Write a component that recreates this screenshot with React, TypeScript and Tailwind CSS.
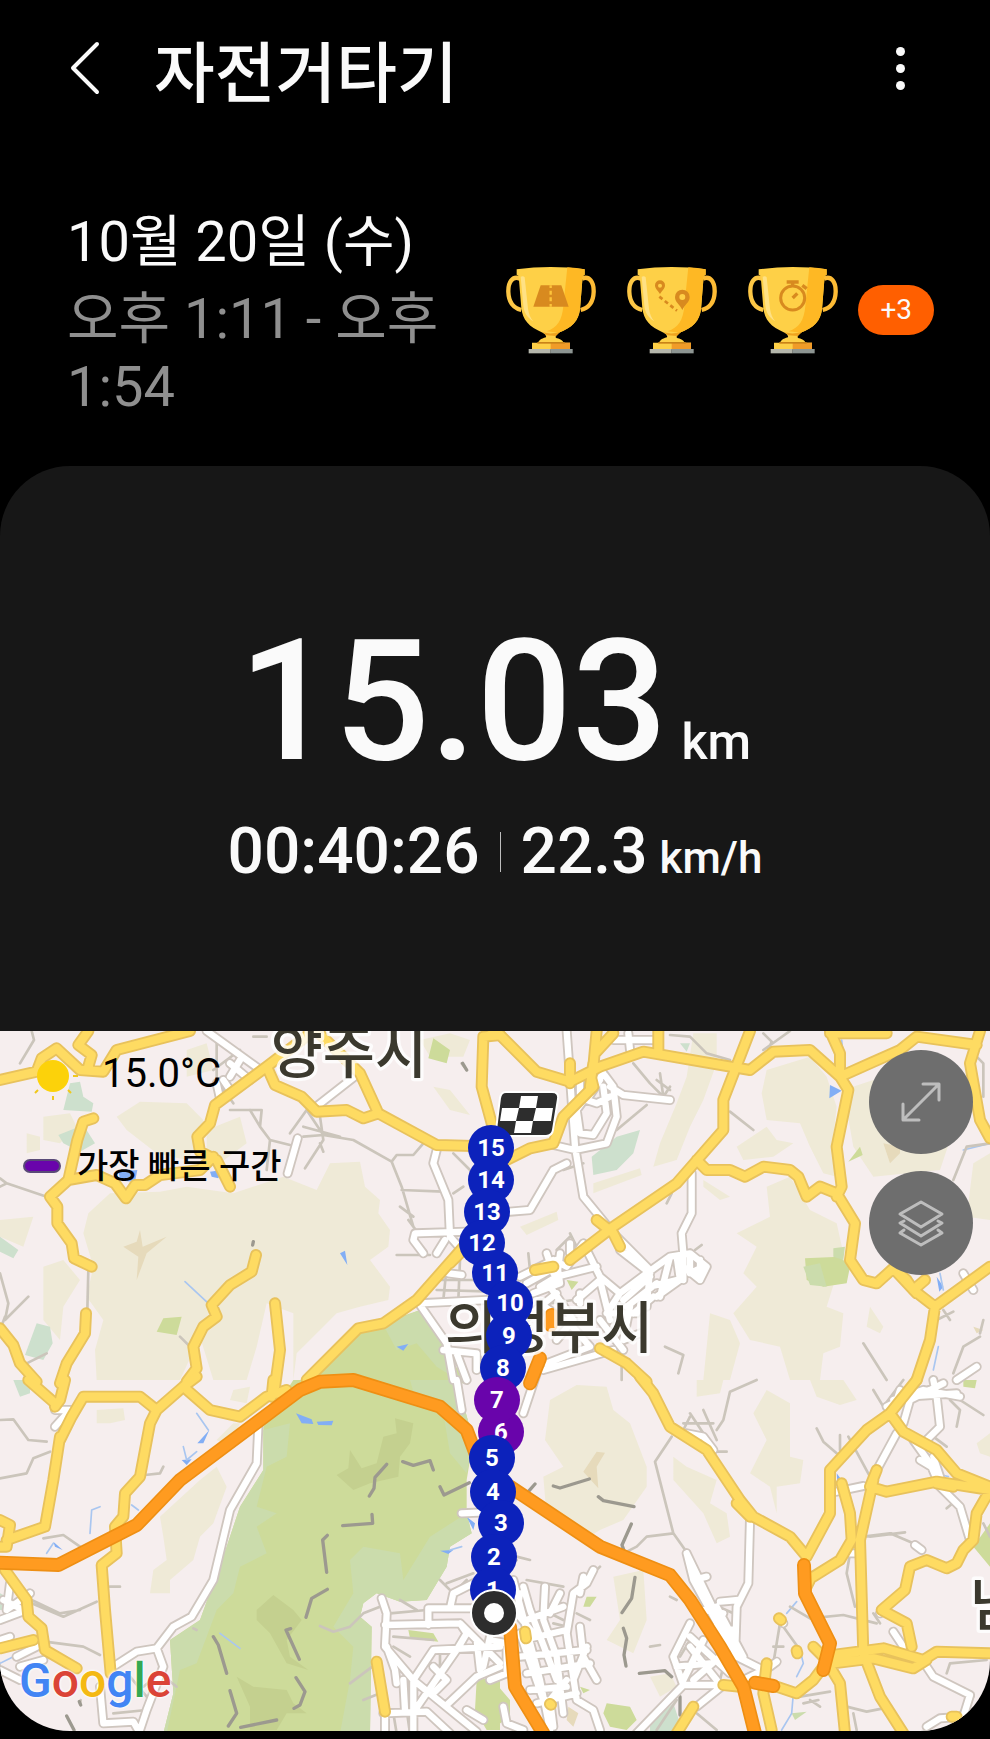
import type { ReactNode } from 'react'

interface MapTile {
  x: number
  y: number
  beige: string
  green: string
  lightGreen: string
  darkGreen: string
  mint: string
  sand: string
  water: string
  stream: string
  minor: string
  ridge: string
  white: string
  yellow: string
  orange: string
}

// Four overlapping tiles on a 2970 x 2100 canvas
const tiles: MapTile[] = [
  {
    x: 0,
    y: -33,
    beige:
      'M265 580L330 520L480 515L560 500L700 520L850 470L950 510L990 430L1080 425L1095 500L1140 540L1135 580L1170 630L1165 680L1110 720L1170 800L1165 840L1080 860L1010 880L960 930L890 1000L880 1080L880 880L800 850L770 980L740 1080L640 1080L600 950L540 1080L290 1080L285 990L310 900L260 830L280 740L250 640ZM350 290L420 245L560 250L610 300L590 380L560 420L470 400L380 330ZM620 330L720 290L740 370L660 430L620 400ZM560 90L620 70L640 150L560 170ZM130 290L210 280L230 320L180 370L130 360ZM80 340L120 350L120 390L80 400ZM1260 60L1350 40L1410 60L1390 110L1290 110ZM1300 200L1350 210L1410 285L1350 270ZM0 600L100 590L70 680L0 650ZM130 740L190 720L240 780L190 860L180 960L130 900Z',
    green: 'M1070 935L1260 870L1400 1090L920 1090ZM490 895L545 890L530 945L470 935ZM1300 55L1350 90L1340 130L1285 115Z',
    lightGreen: 'M1150 915L1260 870L1330 980L1390 1090L1310 1040L1250 970L1190 990Z',
    darkGreen: '',
    mint: 'M210 190L240 185L250 230L280 250L275 275L190 270ZM175 345L250 315L285 370L240 395L190 370ZM110 910L150 920L158 970L130 1020L75 1005ZM0 650L55 690L40 715L0 695Z',
    sand: 'M370 680L410 665L420 630L428 680L500 650L440 700L410 780L415 710Z',
    water: 'M1020 700L1035 692L1042 735ZM355 455L412 450L405 485L362 482ZM630 455L665 450L655 475L635 470ZM1190 980L1225 972L1210 992Z',
    stream: 'M555 785L625 850',
    minor:
      'M95 33L102 60L60 130M0 475L20 490L140 530M0 500L20 490M265 750L262 870M0 760L25 850L15 900L85 830M15 890L0 930M690 270L785 270L780 320L810 360L870 375L810 360L800 450M750 270L780 320M915 445L970 360L960 290M910 350L970 345L1060 360L1175 425L1205 500L1240 620M1175 425L1190 405L1240 405L1270 370M1205 510L1330 515M870 340L920 270L970 345M650 70L650 180L700 250M640 150L720 90M1190 705L1290 705M1360 400L1410 450M1200 560L1240 590M1225 600L1255 640M910 320L1020 350M760 50L800 50M540 950L570 980M1310 780L1500 780M1310 810L1480 815M1340 740L1330 840M1380 720L1375 840M1390 500L1360 520M140 1000L80 1030M960 370L970 395M1385 130L1400 150',
    ridge: 'M760 665L758 675M1388 130L1400 150',
    white:
      'M620 33L775 145M690 130L750 180M720 120L690 170M650 190L660 235M670 180L690 210M1070 165L955 255M893 355L863 460M1310 390L1300 430L1345 540L1350 650L1385 690M1400 635L1245 640L1240 660L1270 700M1335 660L1310 700M1345 760L1385 765M1260 850L1460 840M1260 855L1340 970L1360 1080M1330 990L1430 1000L1430 1050M1370 1000L1400 1080',
    yellow:
      'M0 180L110 155L125 115L170 85L240 150L310 155L350 90L570 33M265 33L235 75L275 105L262 150M280 295L250 305L232 360L205 480M150 530L205 480L290 465L345 490L378 535L405 495L435 495L480 465L600 450L640 410M150 530L172 560L172 610L215 670L222 715L275 740M690 500L650 420L600 395L592 350L630 310L645 255L800 140L940 33M805 150L825 195L905 230L950 275L1040 270L1090 295L1135 280L1080 160L950 33M1135 280L1310 375L1500 380M1500 45L1450 50L1445 200L1475 310M768 705L755 755L690 795L635 855L650 890L610 920L580 980L590 1045L560 1085M825 850L840 990L825 1100M1400 670L1250 840L1150 910L1075 925L920 1080M258 880L255 940L200 1030L180 1090M0 925L40 975L60 1030L110 1085M1350 730L1410 670',
    orange: '',
  },
  {
    x: 1470,
    y: -33,
    beige:
      'M610 40L680 40L680 130L640 240L600 320L560 420L490 440L510 370L560 250L590 170ZM830 150L960 110L1010 170L1040 260L1030 350L1040 470L1000 460L960 380L930 310L830 300L815 220ZM740 380L830 320L860 360L910 370L850 410L760 420ZM1060 210L1150 180L1260 200L1390 330L1350 450L1150 470L1090 380ZM310 490L450 445L455 465L310 520ZM90 620L200 575L205 600L110 645ZM640 480L720 530L690 540L640 500ZM830 500L900 470L960 570L1040 610L1060 700L1010 860L1060 880L1050 980L1000 1000L990 1080L900 1080L870 980L780 960L730 880L800 800L760 760L800 680L740 640L840 590ZM660 880L720 900L750 970L720 1080L640 1080L650 980ZM1140 860L1180 920L1170 940L1130 920ZM1450 430L1500 400L1500 600L1430 590Z',
    green: 'M945 715L1050 710L1080 740L1070 790L1000 800L950 780ZM1110 380L1118 405L1075 425ZM230 780L265 785L245 810Z',
    lightGreen: 'M1030 685L1065 680L1060 720L1030 710ZM940 740L990 730L1010 800L960 795Z',
    darkGreen: '',
    mint: 'M380 350L450 330L430 400L380 450L310 465L305 410ZM570 70L600 70L590 95Z',
    sand: 'M1180 370L1230 380L1230 400L1200 430ZM1450 920L1480 930L1460 940Z',
    water: 'M1020 195L1055 212L1018 235ZM1340 770L1360 800L1348 815Z',
    stream: 'M1330 1050L1345 980M1420 390L1500 370M1350 760L1360 810M1055 60L1060 110',
    minor:
      'M720 275L790 330M430 130L480 190L530 240M820 40L845 65L830 100M900 33L820 90M540 45L600 50L650 100L720 120M525 980L580 1005L565 1060M1120 970L1190 1080M1390 480L1430 380L1500 370M1480 230L1480 130L1460 110M380 330L470 255M350 170L400 230M510 160L520 230L540 200M500 180L540 210M530 550L545 520M615 690L635 675M115 700L120 750M280 430L220 450M1470 940L1480 900M1390 1060L1420 980L1470 950M1360 870L1380 900M1340 900L1390 875M150 900L180 850L250 840M90 780L240 740M270 700L240 640M200 690L240 650M395 1080L395 1020',
    ridge: '',
    white:
      'M230 33L255 380L280 530L370 640L480 750L470 860M340 160L370 200L380 290L350 370L255 390L190 375M340 160L260 270L270 340L310 345L350 280L340 200M360 200L400 225L540 240M330 180L290 240L320 250L360 230M270 170L270 220M370 60L490 60M415 40L420 90M60 575L120 570L190 450L230 430M605 460L605 580L575 640L580 700M90 770L190 720L230 740L280 670L330 770L390 820L470 760L540 710L600 700L650 740L630 780L580 740L570 780L500 830M110 790L200 740M130 820L210 790L200 720M150 800L200 770L320 740M170 700L190 760M210 700L200 790M240 670L240 700M260 840L330 780L360 900M270 820L270 850M390 820L350 880L440 880L480 800L560 780M400 840L480 770M410 860L500 790M430 880L490 830M540 710L510 830M560 710L570 780M390 690L480 760M580 700L580 780M600 700L600 760L640 740M630 720L630 780M100 900L200 820M160 1050L370 990M230 900L300 980L170 1030M420 860L400 960L450 940M330 900L400 990M1420 760L1450 810M1400 1080L1460 1040M180 800L250 900L200 960M150 850L250 920',
    yellow:
      'M30 430L120 385L190 370L220 290L310 200L300 160M0 45L30 45L140 155L240 185L330 140L460 95L780 150L850 95L960 90L1050 170L1075 210L1040 380L1055 500L1040 530M310 140L320 33M315 100L370 40M505 95L505 33M240 130L240 190M300 200L310 130M780 33L700 240L700 330L560 490L370 620L240 720M620 420L650 450L720 450L765 470L820 440L900 450L925 470L950 530L990 500L1040 520L1095 610L1080 720L1120 780L1160 790L1210 745L1250 780L1270 810L1335 860L1500 740M1020 33L1050 100L1050 170L1140 130L1230 90L1280 50L1460 75M1020 40L1190 40M1470 33L1440 130L1470 300L1500 355M320 600L370 640L390 680M1335 860L1320 960L1280 1080M1305 780L1270 810M135 750L190 740M330 985L410 1030L470 1085M1210 745L1280 820',
    orange: 'M150 1015L120 1090M185 885L182 915',
  },
  {
    x: 0,
    y: 1047,
    beige:
      'M290 90L370 85L375 120L330 130L290 130ZM480 410L600 300L650 260L680 320L640 430L600 470L580 540L510 600L510 640L450 640L460 570L500 540L490 470ZM700 30L750 20L740 70L690 60ZM650 180L700 130L720 130L690 200Z',
    green:
      'M880 0L1370 0L1420 180L1400 300L1400 400L1415 460L1350 500L1340 560L1280 660L1200 665L1130 640L1090 670L1080 710L1115 740L1110 1060L490 1060L520 940L510 780L600 720L680 500L720 380L790 270L790 140ZM1430 900L1500 890L1500 1050L1460 1050L1425 990ZM1225 750L1300 760L1315 785L1230 775Z',
    lightGreen:
      'M1230 0L1370 0L1420 180L1400 280L1350 220L1330 100L1250 70ZM790 150L870 130L860 230L800 260L770 380L830 400L770 440L800 520L720 560L700 640L650 690L590 850L540 870L500 1060L490 1060L520 940L510 780L600 720L680 500L720 380L790 270ZM1090 500L1200 520L1210 600L1290 470L1400 400L1415 460L1350 500L1340 560L1280 660L1200 665L1130 640L1090 670L1080 710L1115 740L1110 1060L1020 1060L1050 900L1060 800L1000 740L1060 640L1050 540Z',
    darkGreen:
      'M1050 210L1085 265L1130 250L1150 170L1190 160L1185 115L1240 130L1230 190L1200 230L1195 290L1110 310L1060 330L1010 285L1045 265ZM820 645L880 690L905 720L860 780L870 830L925 870L860 850L810 760L770 720L770 690ZM710 890L760 920L860 930L880 970L920 1000L860 1000L830 1050L750 1050L750 980Z',
    mint: 'M0 640L20 650L15 690L0 690ZM40 0L90 0L90 40L60 50Z',
    sand: '',
    water:
      'M888 100L935 118L940 132L905 130ZM950 125L1000 122L995 136L955 135ZM160 485L188 510L165 500ZM592 190L628 150L610 190ZM545 240L575 238L560 255ZM1320 512L1360 510L1345 522ZM1400 410L1425 430L1420 450Z',
    stream: 'M590 100L625 150M270 460L275 390L300 380M550 200L560 240L590 215M395 375L415 390M140 520L160 490M660 760L720 805M1350 510L1385 500M0 850L40 830',
    minor:
      'M0 120L40 118L85 180L140 185M0 295L80 280L100 235L150 215M130 475L190 465L240 500M95 670L190 710L290 665M95 660L180 700L240 690M135 785L250 800L300 825M435 285L480 280L490 260M330 620L360 620M960 738L1000 755L1050 740L1090 700L1140 680M1340 610L1420 580M1050 910L1130 850M1090 960L1140 940M1360 640L1400 600M340 1000L440 990M390 890L440 950M430 920L480 880L530 920M1170 700L1280 690M1180 770L1300 780M1180 800L1230 830M1200 660L1250 690M1320 600L1360 640M1430 800L1500 850M1180 1000L1190 1060M1220 990L1230 1060M1320 800L1320 880M1270 840L1320 860M240 970L242 960M580 745L590 750',
    ridge:
      'M1160 253L1125 292L1122 325L1108 348M1208 245L1240 256L1290 242L1300 270M1320 320L1332 345L1408 308M1028 437L1118 430L1116 403M982 466L968 480L980 577M982 628L935 655L918 712M872 746L858 750L898 838M640 770L655 795L680 880M690 932L710 1000L685 1038M888 893L915 935L900 975L882 985M722 1042L830 1020M200 1008L222 1050M238 965L242 975',
    white:
      'M775 140L770 250L690 390L640 600L575 710L520 740L470 805L410 815L340 860M470 805L490 860L440 990L420 1050M300 920L310 1030L400 1025L420 1060M165 90L210 90L165 140M1370 0L1385 90M1500 395L1385 400M1145 655L1160 700L1155 800L1240 900L1430 1055M1155 735L1380 730L1500 850M1285 735L1285 685L1440 685M1350 685L1360 640L1440 600M1160 800L1185 870L1190 910M1240 900L1300 810L1500 800M1380 730L1400 760L1370 810L1245 990M1500 860L1430 890L1340 975M1150 1000L1280 995L1350 1060M1210 900L1215 990M1430 780L1440 870M1470 770L1450 860M30 610L20 690L90 640M0 720L80 690M10 660L70 690M50 830L110 800M60 860L130 840M0 870L60 900M1155 1000L1155 1060M0 780L30 770M1240 900L1240 1055M1300 860L1340 900L1300 940M1400 990L1450 1020',
    yellow:
      'M85 0L165 70M195 0L180 60L165 80M180 180L215 110L250 50L420 50L470 90L550 20L590 -10M180 170L160 300L135 440L20 480M0 420L30 435L20 500L0 500M550 20L630 90L720 110L800 50L860 30M820 0L815 50M470 90L450 130L420 290L375 340L370 410L345 440L350 520L305 555L315 690L332 880M15 570L80 660L85 710L125 745L135 810L230 865M0 805L100 780M1130 845L1155 995',
    orange: 'M0 548L175 555L410 435L540 300L900 30L960 5L1060 0L1320 80L1400 150L1430 230',
  },
  {
    x: 1470,
    y: 1047,
    beige:
      'M180 60L260 15L350 20L370 90L420 130L470 260L470 320L400 420L330 450L280 480L240 420L170 410L160 290L220 260L165 180ZM830 30L900 70L900 230L940 240L930 310L860 320L860 400L840 320L780 280L830 180L790 100ZM550 230L590 260L680 300L660 370L710 400L720 470L680 490L640 400L550 300ZM370 590L460 570L470 720L430 820L350 780L390 720ZM960 0L1060 0L1100 60L1050 75L980 50ZM620 0L700 0L690 40L620 50ZM1460 190L1500 160L1500 230L1470 220ZM480 890L540 880L560 920L510 950Z',
    green: 'M350 970L420 980L440 1020L410 1050L360 1040L340 1000ZM0 890L60 960L60 1010L0 1050ZM1500 430L1450 500L1500 560ZM290 650L320 650L300 680L280 680ZM1420 0L1460 0L1455 25L1420 20ZM270 920L300 930L280 940Z',
    lightGreen: 'M905 1000L950 995L915 1020Z',
    darkGreen: '',
    mint: 'M480 1030L550 970L570 1030L540 1060L480 1060Z',
    sand: 'M320 215L345 218L320 260L325 325L280 275ZM235 980L265 1000L250 1040L230 1020Z',
    water: 'M1040 280L1055 300L1042 305Z',
    stream: 'M930 810L940 850L920 890M910 940L905 1000L875 1050M890 700L920 665M1355 285L1375 290',
    minor:
      'M800 0L720 35L700 120L680 150M545 170L495 245L550 460L600 530M400 520L440 500L470 470L550 460M555 150L600 170M580 130L670 130M600 100L640 160M640 90L680 180M600 110L580 150M980 145L1000 185L1040 220M1050 165L1050 210M1075 170L1140 290M1140 470L1245 457M1120 470L1200 460L1270 490M1080 520L1070 580L1095 680M900 680L960 715L1060 705L1160 730M870 730L850 850M880 740L930 810M850 800L880 800M1070 980L1130 995L1180 985M930 950L1020 935M960 960L990 980M940 970L985 960M480 800L510 795M80 530L120 540M0 580L80 540M110 600L220 620M330 560L250 640M190 730L230 740M180 700L220 720M700 860L690 900M500 1050L560 960M1150 700L1170 730M1170 820L1240 800M1370 880L1380 850L1490 840M1240 0L1180 80L1150 30M1410 60L1480 105M1380 60L1410 90L1400 140M1330 170L1370 200M1370 385L1400 360M1480 430L1500 470M660 215L710 215M540 650L560 660M1090 1000L1100 1050M260 700L300 720M620 1000L680 1050M1400 1010L1450 950M600 780L570 830M640 660L730 700',
    ridge:
      'M135 312L115 335M190 318L210 324L298 297M325 350L340 362L432 380M424 432L396 495L402 512M435 592L425 655L396 698M400 745L410 775L402 825L408 858M448 880L525 872L545 890M570 950L570 1005',
    white:
      'M140 -20L100 100M590 520L740 830L820 870L760 900M590 520L610 600L720 800M590 160L640 170L670 210M780 420L775 610L740 680L735 830M690 665L745 660M600 730L550 830L580 915L440 1060M580 915L700 915L620 980M600 800L680 900M560 860L660 850M640 780L580 900M690 830L610 900M600 770L720 880M610 600L650 590M1220 160L1155 280M1260 60L1240 130M1190 80L1250 50L1400 40M1210 60L1300 30L1410 50M1260 60L1360 10M1330 0L1340 50L1350 140L1310 180M1230 30L1210 90M1270 180L1320 250L1350 320L1410 380L1440 480M1290 240L1340 270M1330 230L1350 290M1040 335L1120 318M1210 755L1240 800M1310 860L1330 890L1440 945L1420 1010L1350 1015L1310 1040M70 600L150 900L180 1050M100 620L120 690L200 900M90 640L80 700L130 760M310 570L290 610L250 640L230 760L260 960L310 990L330 1050M280 590L270 640M165 620L160 720L200 830M110 720L220 680M100 780L230 750M90 830L290 810M110 880L300 850M120 930L230 920M140 970L260 940M180 700L210 640M270 740L280 830L320 900M200 830L220 1000M90 760L160 960M230 900L180 960L190 1040M0 780L50 790L50 880L0 900M40 980L50 1030L100 1050M290 800L250 900M1080 520L1095 520M1275 495L1295 510M870 720L880 730M840 860L860 845M1170 700L1190 690M680 680L760 830M640 690L700 700M660 740L730 750M680 780L730 790',
    yellow:
      'M450 -10L490 40L540 140L650 210L750 360L790 410L900 470L950 530L1020 400L1020 270L1130 150L1200 100L1280 0M1200 100L1240 155L1340 210L1400 280L1500 320M1160 270L1140 320L1190 335L1340 305L1500 330L1460 400L1450 480L1420 510L1400 550L1370 565L1310 540L1260 560L1245 630L1175 690L1250 730L1265 800M1150 300L1110 480L1120 820L1170 950L1240 1060M970 590L1050 540L1085 480L1080 400L1055 310M965 590L950 620M1030 825L1180 805L1300 840L1340 815L1500 820M1030 850L1150 835L1270 865L1310 840M860 920L920 940L970 900L1000 860M1020 860L1050 910L1065 1060M830 850L820 940L845 1050M610 980L560 1060M970 800L1000 830M105 755L108 775M780 410L740 370M700 915L750 920M920 812L922 820M867 715L873 720M180 972L183 974M1340 310L1390 320M1385 1010L1400 1010',
    orange:
      'M60 320L330 500L540 585L600 660L690 800L760 920L795 1060M942 555L945 640L1020 790L1000 870M60 740L75 920L160 1060M795 908L850 918',
  },
]

type LayerKey = Exclude<keyof MapTile, 'x' | 'y'>

function Layer({ name, className }: { name: LayerKey; className: string }) {
  return (
    <g className={className}>
      {tiles.map((t) => (
        <path key={`${t.x}-${t.y}`} d={t[name]} transform={`translate(${t.x} ${t.y})`} />
      ))}
    </g>
  )
}

function MapBackground() {
  return (
    <svg viewBox="0 0 2970 2100" className="block h-full w-full" strokeLinecap="round" strokeLinejoin="round" aria-hidden="true">
      <rect width="2970" height="2100" className="fill-[#f6eeee]" />
      <Layer name="beige" className="fill-[#efead7]" />
      <Layer name="green" className="fill-[#cddb9a]" />
      <Layer name="lightGreen" className="fill-[#cbdcac]" />
      <Layer name="darkGreen" className="fill-[#c4d08f]" />
      <Layer name="mint" className="fill-[#cde0cd]" />
      <Layer name="sand" className="fill-[#e6dabb]" />
      <Layer name="water" className="fill-[#82aef5]" />
      <Layer name="stream" className="fill-none stroke-[#a9c6f0] stroke-[5px]" />
      <Layer name="minor" className="fill-none stroke-[#cbc5bb] stroke-[8px]" />
      <Layer name="ridge" className="fill-none stroke-[#9c998f] stroke-[10px]" />
      <Layer name="white" className="fill-none stroke-[#cfc6bf] stroke-[30px]" />
      <Layer name="white" className="fill-none stroke-white stroke-[19px]" />
      <Layer name="yellow" className="fill-none stroke-[#e8c25c] stroke-[36px]" />
      <Layer name="yellow" className="fill-none stroke-[#fedb62] stroke-[25px]" />
      <Layer name="orange" className="fill-none stroke-[#ee8f14] stroke-[42px]" />
      <Layer name="orange" className="fill-none stroke-[#ff9b20] stroke-[32px]" />
      <g
        className="fill-[#3b392e] stroke-white/80 stroke-[20px] font-['Noto_Sans_CJK_KR',sans-serif] text-[170px] font-medium"
        paintOrder="stroke"
      >
        <text x="812" y="125">양주시</text>
        <text x="1335" y="950">의정부시</text>
        <text x="2910" y="1782">남</text>
      </g>
    </svg>
  )
}

interface KmMarker {
  km: number
  x: number
  y: number
  fastest?: boolean
}

// Later entries lie over earlier ones
const markers: KmMarker[] = [
  { km: 6, x: 501, y: 401, fastest: true },
  { km: 15, x: 491, y: 117 },
  { km: 14, x: 491, y: 149 },
  { km: 13, x: 487, y: 181 },
  { km: 12, x: 482, y: 212 },
  { km: 11, x: 495, y: 242 },
  { km: 10, x: 510, y: 272 },
  { km: 9, x: 509, y: 305 },
  { km: 8, x: 503, y: 337 },
  { km: 7, x: 497, y: 369, fastest: true },
  { km: 5, x: 492, y: 427 },
  { km: 4, x: 493, y: 461 },
  { km: 3, x: 501, y: 492 },
  { km: 2, x: 494, y: 526 },
  { km: 1, x: 493, y: 559 },
]

function place(x: number, y: number) {
  return { left: `${(x / 990) * 100}%`, top: `${(y / 700) * 100}%` }
}

function RouteMarkers() {
  return (
    <>
      <svg
        viewBox="0 0 66 48"
        className="absolute w-[66px] -translate-x-1/2 -translate-y-1/2"
        style={place(527, 83)}
        role="img"
        aria-label="도착"
      >
        <path
          d="M12 2H58Q65 2 64 9L59 40Q58 46 52 46H7Q1 46 2 40L6 8Q7 2 12 2Z"
          fill="#2d2d2d"
          stroke="#fff"
          strokeWidth="2"
        />
        <path
          d="M27 6H44L42 18H25ZM22 31H39L37 43H20ZM8 18H25L22 31H6ZM42 18H59L57 31H39Z"
          fill="#fff"
        />
      </svg>
      {markers.map((m) => (
        <span
          key={m.km}
          className={`absolute flex size-[46px] -translate-x-1/2 -translate-y-1/2 items-center justify-center rounded-full text-2xl font-bold text-white ${
            m.fastest ? 'bg-[#6904ab]' : 'bg-[#0c22bb]'
          }`}
          style={place(m.x, m.y)}
        >
          {m.km}
        </span>
      ))}
      <span
        className="absolute flex size-12 -translate-x-1/2 -translate-y-1/2 items-center justify-center rounded-full border-2 border-white bg-[#2d2d2d]"
        style={place(494, 582)}
      >
        <span className="size-5 rounded-full bg-white" />
      </span>
    </>
  )
}

function Trophy({ label, children }: { label: string; children: ReactNode }) {
  return (
    <svg viewBox="0 0 270 264" className="w-[90px] shrink-0" role="img" aria-label={label}>
      <g fill="none" strokeWidth="13">
        <path d="M42 38C20 28 6 48 7 78C8 108 22 126 46 132" stroke="#fdc745" />
        <path d="M228 38C250 28 264 48 263 78C262 108 248 126 224 132" stroke="#fdbb35" />
      </g>
      <path
        d="M32 10Q134 -4 236 10L236 26L230 30L222 130C218 164 198 186 158 200Q146 208 150 216C170 220 172 228 174 234H94C98 224 104 218 120 214Q122 206 110 200C68 182 50 162 46 126L38 30L32 26Z"
        fill="#fed047"
      />
      <path
        d="M184 4Q212 6 236 10L236 26L230 30L222 130C218 164 198 186 158 200L122 196C154 184 168 164 172 120Z"
        fill="#feb824"
      />
      <path d="M44 32Q52 28 56 34L66 128C68 144 74 158 82 166C62 154 54 140 52 118Z" fill="#ffe184" />
      <path d="M110 199Q134 206 162 198L150 210L122 208Z" fill="#efa31f" />
      <path d="M78 230H192V250H78Z" fill="#fed047" />
      <path d="M134 230H192V250H134Z" fill="#f09b28" />
      <path d="M94 228H176V233H94Z" fill="#c98318" />
      <path d="M68 249H134V262H68Z" fill="#b5b7ac" />
      <path d="M134 249H200V262H134Z" fill="#8d9592" />
      {children}
    </svg>
  )
}

function Trophies() {
  return (
    <div className="flex items-center gap-[31px]">
      <Trophy label="최장 거리">
        <path d="M104 58H166L188 122H82Z" fill="#d88a1f" />
        <path d="M134 58V122" stroke="#fdc33a" strokeWidth="7" strokeDasharray="12 8" strokeDashoffset="4" />
      </Trophy>
      <Trophy label="최장 경로">
        <path
          fillRule="evenodd"
          d="M99 84C92 74 84 68 84 58A15 15 0 0 1 114 58C114 68 106 74 99 84ZM99 53A6 6 0 1 0 99 65A6 6 0 1 0 99 53ZM166 132C158 114 144 110 144 93A22 22 0 0 1 188 93C188 110 174 114 166 132ZM166 84A9 9 0 1 0 166 102A9 9 0 1 0 166 84Z"
          fill="#d88a1f"
        />
        <path d="M97 92L150 134" fill="none" stroke="#d88a1f" strokeWidth="8" strokeDasharray="12 9" />
      </Trophy>
      <Trophy label="최장 시간">
        <circle cx="134" cy="96" r="36" fill="none" stroke="#d88a1f" strokeWidth="9" />
        <path d="M116 48H152M134 48V60M163 58L176 68M134 96L148 82" fill="none" stroke="#d88a1f" strokeWidth="10" />
      </Trophy>
    </div>
  )
}

function MapButton({ label, children }: { label: string; children: ReactNode }) {
  return (
    <button
      type="button"
      aria-label={label}
      className="flex size-[104px] items-center justify-center rounded-full bg-[#6e6e6e] text-[#bdbdbd]"
    >
      <svg viewBox="0 0 48 48" className="size-12" fill="none" stroke="currentColor" strokeWidth="3" strokeLinecap="round" strokeLinejoin="round">
        {children}
      </svg>
    </button>
  )
}

const googleLetters = [
  { letter: 'G', color: 'text-[#4285f4]' },
  { letter: 'o', color: 'text-[#db4437]' },
  { letter: 'o', color: 'text-[#f4b913]' },
  { letter: 'g', color: 'text-[#4285f4]' },
  { letter: 'l', color: 'text-[#34a853]' },
  { letter: 'e', color: 'text-[#db4437]' },
]

function RouteMap() {
  return (
    <section aria-label="경로 지도" className="relative aspect-[99/70] w-full overflow-hidden">
      <MapBackground />
      <RouteMarkers />
      <div className="absolute inset-0 flex items-start justify-between pt-[19px] pr-[17px] pb-5 pl-[19px]">
        <div className="flex h-full flex-col text-black">
          <div className="flex h-12 items-center gap-[21px]">
            <svg viewBox="0 0 54 54" className="ml-2 size-[54px]" role="img" aria-label="맑음">
              <circle cx="26" cy="29" r="16" fill="#fcd20a" />
              <path
                d="M26 49V53M11 43L8 46M41 43L44 46M46 29H51"
                stroke="#f0c81c"
                strokeWidth="2"
              />
            </svg>
            <span className="text-[40px] leading-none">15.0°C</span>
          </div>
          <div className="mt-11 flex h-12 items-center gap-4">
            <span className="ml-1 h-3.5 w-[38px] rounded-full border-2 border-[#5a4a78] bg-[#6904ab]" />
            <span className="text-[34px] leading-none font-medium">가장 빠른 구간</span>
          </div>
          <span className="mt-auto text-5xl leading-[60px] font-medium [text-shadow:0_0_3px_#fff,0_0_3px_#fff]">
            {googleLetters.map((g, i) => (
              <span key={i} className={g.color}>
                {g.letter}
              </span>
            ))}
          </span>
        </div>
        <div className="flex flex-col gap-[17px]">
          <MapButton label="지도 확대">
            <path d="M7 41L41 7M26 6H42V22M6 26V42H22" />
          </MapButton>
          <MapButton label="지도 레이어">
            <path d="M24 3L45 15L24 28L3 15ZM7 22L3 24L24 37L45 24L41 22M7 31L3 34L24 46L45 34L41 31" />
          </MapButton>
        </div>
      </div>
    </section>
  )
}

export default function App() {
  return (
    <div className="min-h-screen bg-black pb-2 font-[Roboto,'Noto_Sans_CJK_KR',sans-serif] text-[#fafafa]">
      <header className="flex h-[136px] items-center pr-[74px] pl-[70px]">
        <button type="button" aria-label="뒤로" className="mr-[54px]">
          <svg viewBox="0 0 30 54" className="w-[30px]" fill="none" stroke="currentColor" strokeWidth="4" strokeLinecap="round" strokeLinejoin="round">
            <path d="M27 3L3 27L27 51" />
          </svg>
        </button>
        <h1 className="flex-1 font-['Noto_Sans_CJK_KR',sans-serif] text-[66px] leading-none font-medium">자전거타기</h1>
        <button type="button" aria-label="더보기" className="flex w-8 flex-col items-center gap-2">
          <span className="size-[9px] rounded-full bg-current" />
          <span className="size-[9px] rounded-full bg-current" />
          <span className="size-[9px] rounded-full bg-current" />
        </button>
      </header>

      <div className="flex items-center justify-between pt-[63px] pr-14 pb-[45px] pl-[67px]">
        <div className="w-[400px] text-[56px]">
          <p className="leading-[86px]">10월 20일 (수)</p>
          <p className="leading-[68px] text-[#8f8f8f]">오후 1:11 - 오후 1:54</p>
        </div>
        <div className="flex items-center gap-5">
          <Trophies />
          <span className="rounded-full bg-[#ff5f00] px-[22px] text-[28px] leading-[50px]">+3</span>
        </div>
      </div>

      <main className="overflow-hidden rounded-[70px] bg-[#171717]">
        <div className="flex flex-col items-center pt-[146px] pb-[139px] font-medium">
          <p className="flex items-baseline gap-3.5">
            <span className="text-[168px] leading-[180px]">15.03</span>
            <span className="text-[50px]">km</span>
          </p>
          <div className="mt-5 flex items-center gap-5">
            <span className="text-[64px] leading-[80px]">00:40:26</span>
            <span className="h-10 w-px bg-[#bdbdbd]" />
            <p className="flex items-baseline gap-3">
              <span className="text-[64px] leading-[80px]">22.3</span>
              <span className="text-[44px]">km/h</span>
            </p>
          </div>
        </div>
        <RouteMap />
      </main>
    </div>
  )
}
